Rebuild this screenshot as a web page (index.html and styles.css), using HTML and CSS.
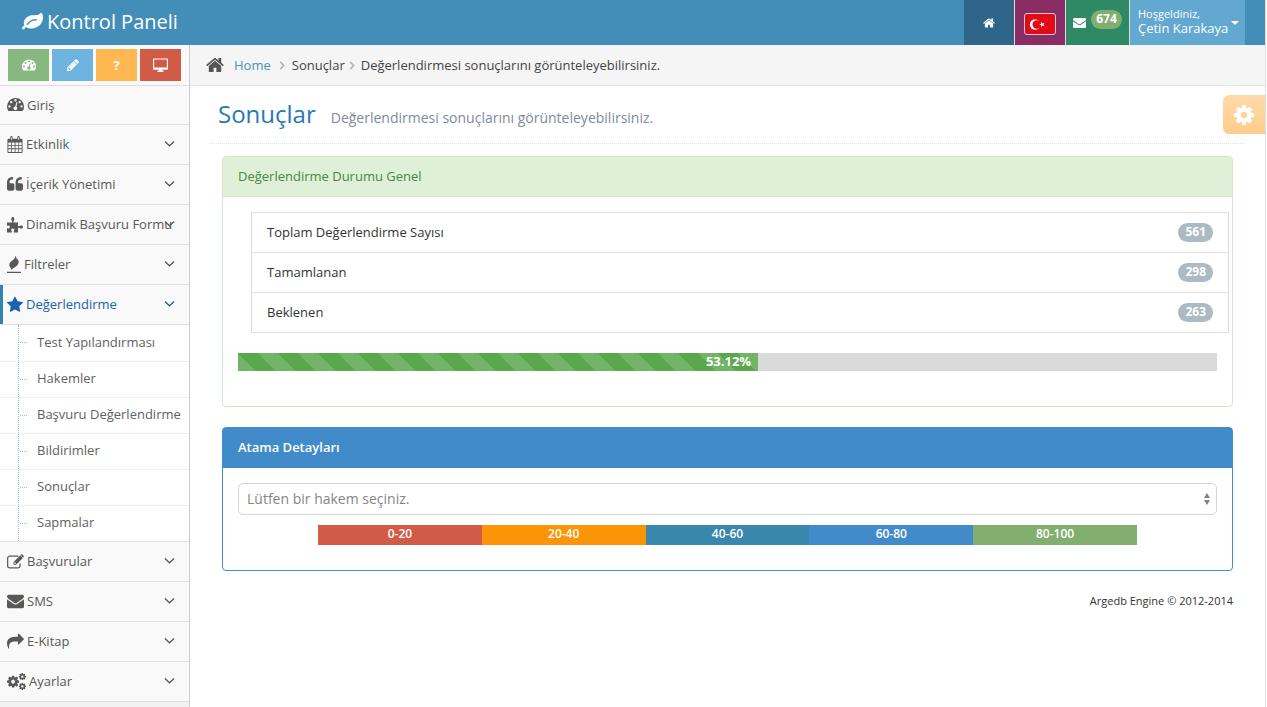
FILE: index.html
```html
<!DOCTYPE html>
<html lang="tr">
<head>
<meta charset="utf-8">
<title>Kontrol Paneli</title>
<link rel="stylesheet" href="styles.css">
</head>
<body>
<svg class="sprite" aria-hidden="true">
  <symbol id="home" viewBox="64 200 1664 1400"><path d="M1472 992v480q0 26-19 45t-45 19h-384v-384h-256v384h-384q-26 0-45-19t-19-45v-480q0-1 .5-3t.5-3l575-474 575 474q1 2 1 6zm223-69l-62 74q-8 9-21 11h-3q-13 0-21-7l-692-577-692 577q-12 8-24 7-13-2-21-11l-62-74q-8-10-7-23.500t11-21.500l719-599q32-26 76-26t76 26l244 204v-195q0-14 9-23t23-9h192q14 0 23 9t9 23v408l219 182q10 8 11 21.500t-7 23.500z"/></symbol>
  <symbol id="envelope" viewBox="0 192 1792 1536"><path d="M1792 710v794q0 66-47 113t-113 47h-1472q-66 0-113-47t-47-113v-794q44 49 101 87 362 246 497 345 57 42 92.500 65.500t94.500 48 110 24.500h2q51 0 110-24.500t94.500-48 92.500-65.500q170-123 498-345 57-39 100-87zm0-294q0 79-49 151t-122 123q-376 261-468 325-10 7-42.500 31t-54 38.500-52 32.500-57.500 27-50 9h-2q-23 0-50-9t-57.500-27-52-32.500-54-38.500-42.500-31q-91-64-262-182.500t-205-142.500q-62-42-117-115.500t-55-136.500q0-78 41.500-130t118.500-52h1472q65 0 112.500 47t47.500 113z"/></symbol>
  <symbol id="cog" viewBox="128 128 1536 1536"><path d="M1152 896q0-106-75-181t-181-75-181 75-75 181 75 181 181 75 181-75 75-181zm512-109v222q0 12-8 23t-20 13l-185 28q-19 54-39 91 35 50 107 138 10 12 10 25t-9 23q-27 37-99 108t-94 71q-12 0-26-9l-138-108q-44 23-91 38-16 136-29 186-7 28-36 28h-222q-14 0-24.500-8.500t-11.500-21.500l-28-184q-49-16-90-37l-141 107q-10 9-25 9-14 0-25-11-126-114-165-168-7-10-7-23 0-12 8-23 15-21 51-66.500t54-70.500q-27-50-41-99l-183-27q-13-2-21-12.500t-8-23.500v-222q0-12 8-23t19-13l186-28q14-46 39-92-40-57-107-138-10-12-10-24 0-10 9-23 26-36 98.500-107.500t94.500-71.500q13 0 26 10l138 107q44-23 91-38 16-136 29-186 7-28 36-28h222q14 0 24.500 8.500t11.500 21.500l28 184q49 16 90 37l142-107q9-9 24-9 13 0 25 10 129 119 165 170 7 8 7 22 0 12-8 23-15 21-51 66.500t-54 70.500q26 50 41 98l183 28q13 2 21 12.500t8 23.500z"/></symbol>
  <symbol id="leaf" viewBox="0 128 1792 1536"><path d="M1280 704q0-26-19-45t-45-19q-172 0-318 49.500t-259.500 134-235.500 219.500q-19 21-19 45 0 26 19 45t45 19q24 0 45-19 27-24 74-71t67-66q137-124 268.500-176t313.500-52q26 0 45-19t19-45zm512-198q0 95-20 193-46 224-184.500 383t-357.500 268q-214 108-438 108-148 0-286-47-15-5-88-42t-96-37q-16 0-39.500 32t-45 70-52.500 70-60 32q-43 0-63.500-17.500t-45.500-59.500q-2-4-6-11t-5.500-10-3-9.500-1.500-13.500q0-35 31-73.500t68-65.500 68-56 31-48q0-4-14-38t-16-44q-9-51-9-104 0-115 43.500-220t119-184.500 170.500-139 204-95.500q55-18 145-25.500t179.500-9 178.500-6 163.500-24 113.500-56.500l29.500-29.500 29.500-28 27-20 36.500-16 43.500-4.500q39 0 70.500 46t47.500 112 24 124 8 96z"/></symbol>
  <symbol id="star" viewBox="64 32 1664 1664"><path d="M1728 647q0 22-26 48l-363 354 86 500q1 7 1 20 0 21-10.500 35.500t-30.500 14.500q-19 0-40-12l-449-236-449 236q-22 12-40 12-21 0-31.500-14.500t-10.500-35.500q0-6 2-20l86-500-364-354q-25-27-25-48 0-37 56-46l502-73 225-455q19-41 49-41t49 41l225 455 502 73q56 9 56 46z"/></symbol>
  <symbol id="share" viewBox="0 64 1792 1664"><path d="M1792 640q0 26-19 45l-512 512q-19 19-45 19t-45-19-19-45v-256h-224q-98 0-175.500 6t-154 21.500-133 42.500-105.500 69.500-80 101-48.500 138.500-17.500 181q0 55 5 123 0 6 2.500 23.500t2.500 26.500q0 15-8.500 25t-23.500 10q-16 0-28-17-7-9-13-22t-13.500-30-10.500-24q-127-285-127-451 0-199 53-333 162-403 875-403h224v-256q0-26 19-45t45-19 45 19l512 512q19 19 19 45z"/></symbol>
  <symbol id="pencil" viewBox="128 128 1536 1536"><path d="M491 1536l91-91-235-235-91 91v107h128v128h107zm523-928q0-22-22-22-10 0-17 7l-542 542q-7 7-7 17 0 22 22 22 10 0 17-7l542-542q7-7 7-17zm-54-192l416 416-832 832h-416v-416zm683 96q0 53-37 90l-166 166-416-416 166-165q36-38 90-38 53 0 91 38l235 234q37 39 37 91z"/></symbol>
  <symbol id="quote" viewBox="64 64 1664 1664"><path id="q" d="M832 960v384q0 80-56 136t-136 56h-384q-80 0-136-56t-56-136v-704q0-104 40.500-198.500t109.500-163.500 163.500-109.500 198.500-40.500h64q26 0 45 19t19 45v128q0 26-19 45t-45 19h-64q-106 0-181 75t-75 181v32q0 40 28 68t68 28h224q80 0 136 56t56 136z"/><use href="#q" x="896"/></symbol>
  <symbol id="gauge" viewBox="0 0 18 16"><path fill-rule="evenodd" d="M9 1a9 9 0 0 1 9 9c0 1.800-.5 3.400-1.300 4.700-.2.200-.4.300-.7.300H2c-.3 0-.5-.1-.7-.3A8.800 8.800 0 0 1 0 10a9 9 0 0 1 9-9zM9 2.300a1.250 1.250 0 1 0 0 2.500 1.250 1.250 0 0 0 0-2.500zM4.500 4.200a1.250 1.250 0 1 0 0 2.500 1.250 1.250 0 0 0 0-2.500zm9 0a1.250 1.250 0 1 0 0 2.500 1.250 1.250 0 0 0 0-2.500zM2.600 8.800a1.250 1.250 0 1 0 0 2.500 1.250 1.250 0 0 0 0-2.500zm12.800 0a1.250 1.250 0 1 0 0 2.500 1.250 1.250 0 0 0 0-2.500zM10 5.700 8.700 10a2 2 0 1 0 1.200.3l1.200-4.300z"/></symbol>
  <symbol id="calendar" viewBox="0 0 16 18"><path fill-rule="evenodd" d="M1 3h2V1.500C3 .6 3.500 0 4.200 0s1.300.6 1.300 1.500V3h5V1.500c0-.9.500-1.500 1.300-1.500S13 .6 13 1.500V3h2c.6 0 1 .4 1 1v13c0 .6-.4 1-1 1H1c-.6 0-1-.4-1-1V4c0-.6.400-1 1-1zm0 4v2.500h2.700V7zm3.600 0v2.500h3V7zm3.900 0v2.500h3V7zm3.800 0v2.500H15V7zM1 10.400v2.700h2.700v-2.700zm3.600 0v2.700h3v-2.700zm3.900 0v2.700h3v-2.700zm3.800 0v2.700H15v-2.700zM1 14v3h2.700v-3zm3.600 0v3h3v-3zm3.900 0v3h3v-3zm3.800 0v3H15v-3zM3.900 1.300V4.500h.7V1.300zm7.500 0v3.200h.7V1.300z"/></symbol>
  <symbol id="puzzle" viewBox="0 0 16 16"><path d="M0 6h4.500c.8 0 .9-.8.400-1.600-.9-1.400-.8-3.900.9-3.900s1.800 2.500.9 3.900c-.5.800-.4 1.600.4 1.600H11v3c0 .8.700 1 1.400.5 1.200-.9 3.600-.8 3.600 1s-2.400 1.900-3.600 1c-.7-.5-1.400-.3-1.400.5v4H7.300c-.7 0-.8-.6-.4-1.300.8-1.500.7-2.700-1.100-2.700s-1.900 1.200-1.100 2.700c.4.700.3 1.300-.4 1.300H0v-4.500c1.500.9 2.800.5 2.800-1S1.500 8.600 0 9.500z"/></symbol>
  <symbol id="fire" viewBox="0 0 14 17"><path d="M8 0c.3 1.800-.4 2.700-2 3.900C4 5.300 2.300 6.700 2.300 9c0 1.900 1.500 2.700 2.300 5 .3-1 1.300-1.500 2.600-2.300C9.500 10.300 11.700 8.700 11.700 6c0-1.400-.9-2-.7-3.500-.6.500-.9 1-1 1.700C9.800 2.500 9.500 1 8 0zM0 15.800h14V17H0z"/></symbol>
  <symbol id="edit" viewBox="0 0 18 16"><path fill="none" stroke="currentColor" stroke-width="1.300" d="M12 2.200H3A2.300 2.300 0 0 0 .7 4.500v8A2.300 2.300 0 0 0 3 14.800h8.500a2.300 2.300 0 0 0 2.300-2.300V10"/><path fill-rule="evenodd" d="m14 1.500 2.800 2.800-7.200 7.200H6.800V8.700zm-6.200 7.700v1.300h1.400l.5-.5-1.400-1.400zM15 .6c.4-.4.900-.4 1.300 0l1.300 1.300c.4.400.4.900 0 1.300l-.5.500-2.700-2.700z"/></symbol>
  <symbol id="cogs" viewBox="0 0 19 17"><use href="#cog" x="0" y="2.500" width="12.200" height="12.200"/><use href="#cog" x="11.700" y="0" width="7.300" height="7.300"/><use href="#cog" x="11.700" y="9.700" width="7.300" height="7.300"/></symbol>
  <symbol id="desktop" viewBox="0 0 16 15"><path fill-rule="evenodd" d="M1 0h14c.6 0 1 .4 1 1v10c0 .6-.4 1-1 1H9.800v1.200h1.400V14.500H4.800v-1.300h1.400V12H1c-.6 0-1-.4-1-1V1c0-.6.4-1 1-1zm.200 1.200v8.300h13.600V1.200z"/></symbol>
  <symbol id="down" viewBox="0 0 12 8"><path fill="none" stroke="currentColor" stroke-width="1.400" d="m1 1.200 5 4.800 5-4.800"/></symbol>
  <symbol id="right" viewBox="0 0 6 10"><path fill="none" stroke="currentColor" stroke-width="1.900" d="m1 1 3.800 4L1 9"/></symbol>
</svg>

<div class="page">
  <header class="navbar">
    <a class="brand" href="#"><svg class="brand-icon"><use href="#leaf"/></svg>Kontrol Paneli</a>
    <nav class="tools" aria-label="Üst menü">
      <a class="tool tool-home" href="#" aria-label="Ana sayfa"><svg class="i-tool"><use href="#home"/></svg></a>
      <a class="tool tool-lang" href="#" aria-label="Türkçe">
        <svg class="flag" viewBox="0 0 32 22"><rect x=".5" y=".5" width="31" height="21" rx="2.500" fill="#e30a17" stroke="#e2cbd2"/><circle cx="11" cy="11.500" r="5.200" fill="#fff"/><circle cx="12.700" cy="11.500" r="4.200" fill="#e30a17"/><path fill="#fff" d="m15.300 11.500 2-.7v-2l1.300 1.600 2-.6-1.200 1.700 1.200 1.700-2-.6-1.300 1.600v-2z"/></svg>
      </a>
      <a class="tool tool-mail" href="#"><svg class="i-mail"><use href="#envelope"/></svg><span class="badge badge-mail">674</span></a>
      <button class="tool tool-user" type="button"><span class="user"><small>Hoşgeldiniz,</small><b>Çetin Karakaya</b></span><span class="caret"></span></button>
    </nav>
  </header>

  <div class="columns">
    <aside class="sidebar">
      <div class="shortcuts">
        <button type="button" class="shortcut green" aria-label="Panel"><svg class="i-short"><use href="#gauge"/></svg></button>
        <button type="button" class="shortcut blue" aria-label="Düzenle"><svg class="i-short i-pencil"><use href="#pencil"/></svg></button>
        <button type="button" class="shortcut orange">?</button>
        <button type="button" class="shortcut red" aria-label="Ekran"><svg class="i-short i-desktop"><use href="#desktop"/></svg></button>
      </div>
      <ul class="menu">
        <li><a class="item" href="#"><svg class="i-menu wide"><use href="#gauge"/></svg>Giriş</a></li>
        <li><a class="item" href="#"><svg class="i-menu"><use href="#calendar"/></svg>Etkinlik<svg class="chev"><use href="#down"/></svg></a></li>
        <li><a class="item" href="#"><svg class="i-menu"><use href="#quote"/></svg>İçerik Yönetimi<svg class="chev"><use href="#down"/></svg></a></li>
        <li><a class="item" href="#"><svg class="i-menu"><use href="#puzzle"/></svg>Dinamik Başvuru Formu<svg class="chev"><use href="#down"/></svg></a></li>
        <li><a class="item" href="#"><svg class="i-menu narrow"><use href="#fire"/></svg>Filtreler<svg class="chev"><use href="#down"/></svg></a></li>
        <li><a class="item active" href="#"><svg class="i-menu"><use href="#star"/></svg>Değerlendirme<svg class="chev"><use href="#down"/></svg></a>
          <ul class="submenu">
            <li><a href="#">Test Yapılandırması</a></li>
            <li><a href="#">Hakemler</a></li>
            <li><a href="#">Başvuru Değerlendirme</a></li>
            <li><a href="#">Bildirimler</a></li>
            <li><a href="#">Sonuçlar</a></li>
            <li><a href="#">Sapmalar</a></li>
          </ul>
        </li>
        <li><a class="item" href="#"><svg class="i-menu wide"><use href="#edit"/></svg>Başvurular<svg class="chev"><use href="#down"/></svg></a></li>
        <li><a class="item" href="#"><svg class="i-menu wide"><use href="#envelope"/></svg>SMS<svg class="chev"><use href="#down"/></svg></a></li>
        <li><a class="item" href="#"><svg class="i-menu wide"><use href="#share"/></svg>E-Kitap<svg class="chev"><use href="#down"/></svg></a></li>
        <li><a class="item" href="#"><svg class="i-menu widest"><use href="#cogs"/></svg>Ayarlar<svg class="chev"><use href="#down"/></svg></a></li>
      </ul>
    </aside>

    <main class="main">
      <nav class="crumbs" aria-label="Konum">
        <svg class="i-home"><use href="#home"/></svg>
        <a href="#">Home</a>
        <svg class="sep"><use href="#right"/></svg>
        <span>Sonuçlar</span>
        <svg class="sep sep-tight"><use href="#right"/></svg>
        <span>Değerlendirmesi sonuçlarını görünteleyebilirsiniz.</span>
      </nav>
      <button class="settings" type="button" aria-label="Ayarlar"><svg class="i-cog"><use href="#cog"/></svg></button>

      <div class="content">
        <div class="heading">
          <h1>Sonuçlar</h1>
          <p>Değerlendirmesi sonuçlarını görünteleyebilirsiniz.</p>
        </div>

        <section class="panel panel-success">
          <h2>Değerlendirme Durumu Genel</h2>
          <div class="panel-body">
            <ul class="totals">
              <li>Toplam Değerlendirme Sayısı<span class="badge">561</span></li>
              <li>Tamamlanan<span class="badge">298</span></li>
              <li>Beklenen<span class="badge">263</span></li>
            </ul>
            <div class="progress"><div class="bar" style="width:53.12%">53.12%</div></div>
          </div>
        </section>

        <section class="panel panel-primary">
          <h2>Atama Detayları</h2>
          <div class="panel-body">
            <div class="select-wrap">
              <select aria-label="Hakem"><option>Lütfen bir hakem seçiniz.</option></select>
              <svg class="updown" viewBox="0 0 6 12"><path d="M0 5h6L3 0zM0 7h6l-3 5z"/></svg>
            </div>
            <div class="ranges">
              <span class="r1">0-20</span><span class="r2">20-40</span><span class="r3">40-60</span><span class="r4">60-80</span><span class="r5">80-100</span>
            </div>
          </div>
        </section>

        <footer>Argedb Engine © 2012-2014</footer>
      </div>
    </main>
  </div>
</div>
</body>
</html>
```

FILE: styles.css
```css
* { box-sizing: border-box; }
body {
  margin: 0;
  background: #fff;
  color: #393939;
  font: 13px/20px "Open Sans", "Noto Sans", sans-serif;
}
ul { list-style: none; margin: 0; padding: 0; }
a { color: inherit; text-decoration: none; }
button { font: inherit; border: 0; padding: 0; margin: 0; cursor: pointer; }
svg { fill: currentColor; flex: none; display: block; }
.sprite { position: absolute; width: 0; height: 0; }

.page {
  min-height: 100vh;
  margin-right: 1px;
  border-right: 1px solid #e0e0e0;
  display: flex;
  flex-direction: column;
}

/* Top bar */
.navbar {
  height: 45px;
  padding: 0 20px;
  background: #438eb9;
  color: #fff;
  display: flex;
  justify-content: space-between;
}
.brand { display: flex; align-items: center; gap: 4px; font-size: 20px; font-weight: 500; padding: 0 0 2px 2px; }
.brand-icon { width: 21px; height: 18px; }
.tools { display: flex; }
.tool { display: flex; align-items: center; justify-content: center; color: #fff; }
.tool + .tool { border-left: 1px solid #ddd; }
.tool-home { width: 50px; background: #2e6589; }
.tool-lang { width: 51px; background: #892e65; }
.tool-mail { width: 64px; background: #2e8965; gap: 5px; }
.tool-user { width: 116px; background: #62a8d1; justify-content: flex-start; padding-left: 8px; gap: 3px; }
.i-tool { width: 12px; height: 10px; }
.flag { width: 32px; height: 22px; margin-top: 3px; }
.i-mail { width: 13px; height: 12px; }
.user { display: flex; flex-direction: column; line-height: 14px; text-align: left; white-space: nowrap; padding-bottom: 3px; }
.user small { font-size: 11px; font-weight: 500; }
.user b { font-size: 13px; font-weight: 500; }
.caret { border: 4px solid transparent; border-top-color: #fff; border-bottom: 0; }

.badge {
  background: #abbac3;
  color: #fff;
  font-size: 12px;
  font-weight: 700;
  line-height: 15px;
  padding: 1px 7px 3px;
  border-radius: 10px;
}
.badge-mail { background: #82af6f; padding: 1px 5px 3px; margin-bottom: 6px; }

.columns { flex: 1; display: flex; }

/* Sidebar */
.sidebar { width: 190px; flex: none; background: #f2f2f2; border-right: 1px solid #ccc; }
.shortcuts { display: flex; gap: 3px; padding: 4px 8px; height: 41px; background: #fafafa; border-bottom: 1px solid #ddd; }
.shortcut { width: 41px; height: 32px; color: #fff; font-weight: 700; display: flex; align-items: center; justify-content: center; }
.green { background: #87b87f; }
.blue { background: #6fb3e0; }
.orange { background: #ffb752; }
.red { background: #d15b47; }
.i-short { width: 14px; height: 14px; }
.i-pencil { width: 12px; height: 12px; }
.i-desktop { width: 15px; height: 15px; }
.menu > li { border-bottom: 1px solid #e0e0e0; }
.item {
  position: relative;
  height: 39px;
  padding: 0 0 1px 7px;
  display: flex;
  align-items: center;
  gap: 3px;
  background: #f9f9f9;
  color: #585858;
  white-space: nowrap;
}
.menu > li:first-child .item { height: 38px; }
.i-menu { width: 16px; height: 17px; }
.i-menu.wide { width: 17px; }
.i-menu.narrow { width: 14px; }
.i-menu.widest { width: 19px; }
.chev { position: absolute; right: 14px; top: 15px; width: 11px; height: 8px; }
.active { color: #1963aa; box-shadow: inset 3px 0 #3382af; }
.submenu { position: relative; background: #fff; border-top: 1px solid #e0e0e0; }
.submenu::before { content: ""; position: absolute; left: 18px; top: 0; bottom: 0; border-left: 1px dotted #9dbdd6; }
.submenu a { position: relative; display: block; height: 36px; padding: 7px 0 0 37px; color: #616161; white-space: nowrap; }
.submenu a::before { content: ""; position: absolute; left: 20px; top: 17px; width: 7px; border-top: 1px dotted #9dbdd6; }
.submenu li + li a { border-top: 1px dotted #e4e4e4; padding-top: 6px; }

/* Main column */
.main { position: relative; flex: 1; min-width: 0; }
.crumbs { height: 41px; display: flex; align-items: center; padding: 0 16px; background: #f5f5f5; border-bottom: 1px solid #e5e5e5; color: #444; }
.i-home { width: 18px; height: 16px; margin-right: 10px; color: #555; }
.crumbs a { color: #4c8fbd; }
.sep { width: 6px; height: 9px; margin: 0 7px 0 8px; color: #b2b6bf; }
.sep-tight { margin: 0 6px 0 4px; }
.settings {
  position: absolute;
  right: 0;
  top: 50px;
  width: 42px;
  height: 39px;
  border-radius: 6px 0 0 6px;
  background: linear-gradient(#ffdaa9, #ffcd8a);
  color: #fff;
  display: flex;
  align-items: center;
  justify-content: center;
}
.i-cog { width: 20px; height: 20px; }

.content { padding: 12px 20px 20px; }
.heading { display: flex; align-items: baseline; gap: 15px; height: 46px; padding: 0 8px; border-bottom: 1px dotted #e2e2e2; margin-bottom: 12px; }
.heading h1 { margin: 0; font-size: 24px; line-height: 32px; font-weight: 400; color: #2679b5; }
.heading p { margin: 0; font-size: 14px; font-weight: 500; color: #8089a0; }

.panel { margin: 0 12px 20px; border: 1px solid; border-radius: 4px; }
.panel h2 { margin: 0; padding: 9px 15px 10px; font-size: 13px; line-height: 20px; font-weight: 400; border-bottom: 1px solid; }
.panel-body { padding: 15px; }
.panel-success { border-color: #d0e9c0; }
.panel-success h2 { background: #dff0d8; border-color: #d0e9c0; color: #468847; }
.panel-success .panel-body { padding-bottom: 35px; }
.panel-primary { border-color: #428bca; }
.panel-primary h2 { background: #428bca; border-color: #428bca; color: #fff; font-weight: 600; }
.panel-primary .panel-body { padding-bottom: 25px; }

.totals { margin: 0 -12px 20px 13px; border: 1px solid #ddd; border-top: 0; color: #333; }
.totals li { height: 40px; padding: 0 15px 1px; display: flex; align-items: center; justify-content: space-between; border-top: 1px solid #ddd; }
.progress { height: 18px; background: #dadada; }
.bar {
  height: 18px;
  padding-right: 7px;
  color: #fff;
  font-weight: 700;
  line-height: 16px;
  text-align: right;
  background: #59a84b linear-gradient(45deg, #72b566 25%, transparent 25%, transparent 50%, #72b566 50%, #72b566 75%, transparent 75%) 20px 0 / 40px 40px;
}

.select-wrap { position: relative; margin-bottom: 10px; }
select {
  appearance: none;
  display: block;
  width: 100%;
  height: 32px;
  padding: 0 8px;
  border: 1px solid #d5d5d5;
  border-radius: 5px;
  background: #fff;
  color: #858585;
  font: 500 14px/20px "Open Sans", "Noto Sans", sans-serif;
}
.updown { position: absolute; right: 7px; top: 10px; width: 6px; height: 12px; color: #808080; pointer-events: none; }
.ranges { display: flex; margin: 0 80px; color: #fff; font-size: 12px; font-weight: 600; line-height: 18px; text-align: center; }
.ranges span { flex: 1; height: 20px; }
.r1 { background: #d15b47; }
.r2 { background: #fb9507; }
.r3 { background: #3a87ad; }
.r4 { background: #428bca; }
.r5 { background: #82af6f; }

footer { margin: 0 12px; text-align: right; font-size: 11px; color: #333; }
```
